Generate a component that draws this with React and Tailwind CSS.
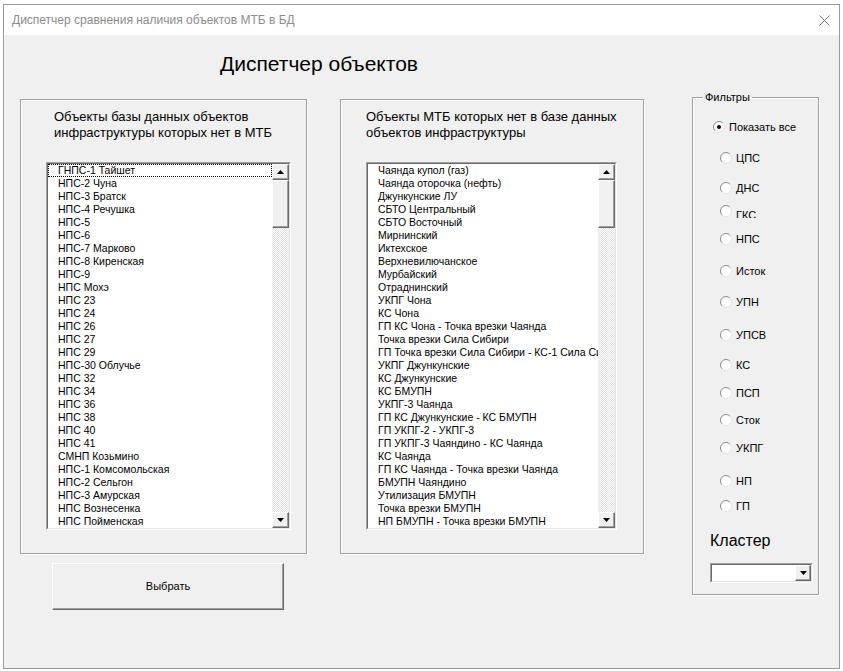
import React from 'react'

const leftItems = [
  'ГНПС-1 Тайшет', 'НПС-2 Чуна', 'НПС-3 Братск', 'НПС-4 Речушка', 'НПС-5', 'НПС-6',
  'НПС-7 Марково', 'НПС-8 Киренская', 'НПС-9', 'НПС Мохэ', 'НПС 23', 'НПС 24', 'НПС 26',
  'НПС 27', 'НПС 29', 'НПС-30 Облучье', 'НПС 32', 'НПС 34', 'НПС 36', 'НПС 38', 'НПС 40',
  'НПС 41', 'СМНП Козьмино', 'НПС-1 Комсомольская', 'НПС-2 Сельгон', 'НПС-3 Амурская',
  'НПС Вознесенка', 'НПС Пойменская',
];

const rightItems = [
  'Чаянда купол (газ)', 'Чаянда оторочка (нефть)', 'Джункунские ЛУ', 'СБТО Центральный',
  'СБТО Восточный', 'Мирнинский', 'Иктехское', 'Верхневилючанское', 'Мурбайский',
  'Отраднинский', 'УКПГ Чона', 'КС Чона', 'ГП КС Чона - Точка врезки Чаянда',
  'Точка врезки Сила Сибири', 'ГП Точка врезки Сила Сибири - КС-1 Сила Сибири',
  'УКПГ Джункунские', 'КС Джункунские', 'КС БМУПН', 'УКПГ-3 Чаянда',
  'ГП КС Джункунские - КС БМУПН', 'ГП УКПГ-2 - УКПГ-3', 'ГП УКПГ-3 Чаяндино - КС Чаянда',
  'КС Чаянда', 'ГП КС Чаянда - Точка врезки Чаянда', 'БМУПН Чаяндино', 'Утилизация БМУПН',
  'Точка врезки БМУПН', 'НП БМУПН - Точка врезки БМУПН',
];

// vertical gaps copied from the form (the designer did not align them)
const filters = [
  { label: 'Показать все', mt: 'mt-[23px]', pl: 'pl-[20px]', checked: true },
  { label: 'ЦПС', mt: 'mt-[18px]', pl: 'pl-[27px]' },
  { label: 'ДНС', mt: 'mt-[17px]', pl: 'pl-[27px]' },
  { label: 'ГКС', mt: 'mt-[10px]', pl: 'pl-[27px]', clipped: true },
  { label: 'НПС', mt: 'mt-[15px]', pl: 'pl-[27px]' },
  { label: 'Исток', mt: 'mt-[19px]', pl: 'pl-[27px]' },
  { label: 'УПН', mt: 'mt-[18px]', pl: 'pl-[27px]' },
  { label: 'УПСВ', mt: 'mt-[20px]', pl: 'pl-[27px]' },
  { label: 'КС', mt: 'mt-[17px]', pl: 'pl-[27px]' },
  { label: 'ПСП', mt: 'mt-[15px]', pl: 'pl-[27px]' },
  { label: 'Сток', mt: 'mt-[14px]', pl: 'pl-[27px]' },
  { label: 'УКПГ', mt: 'mt-[15px]', pl: 'pl-[27px]' },
  { label: 'НП', mt: 'mt-[20px]', pl: 'pl-[27px]' },
  { label: 'ГП', mt: 'mt-[12px]', pl: 'pl-[27px]' },
];

function Arrow({ up }) {
  return (
    <svg width="7" height="4" viewBox="0 0 7 4">
      <polygon points={up ? '3.5,0 7,4 0,4' : '0,0 7,0 3.5,4'} fill="#000" />
    </svg>
  );
}

function Raised({ className = '', children }) {
  return (
    <div className={`flex items-center justify-center border border-t-white border-l-white border-r-[#696969] border-b-[#696969] bg-[#f0f0f0] shadow-[inset_-1px_-1px_0_#a0a0a0] ${className}`}>
      {children}
    </div>
  );
}

function Scrollbar() {
  return (
    <div className="flex w-[17px] shrink-0 flex-col bg-[repeating-conic-gradient(#e4e4e4_0%_25%,#fbfbfb_0%_50%)] bg-[length:2px_2px]">
      <Raised className="h-[16px]"><Arrow up /></Raised>
      <Raised className="h-[48px]" />
      <div className="flex-1" />
      <Raised className="h-[16px]"><Arrow /></Raised>
    </div>
  );
}

function ListBox({ items, focused, className = '' }) {
  return (
    <div className={`border border-[#a0a0a0] border-r-white border-b-white ${className}`}>
      <div className="flex h-full border border-[#696969] border-r-[#e3e3e3] border-b-[#e3e3e3] bg-white">
        <div className="flex-1 overflow-hidden">
          {items.map((it, i) => (
            <div
              key={i}
              className={`h-[13px] whitespace-nowrap pl-[9px] text-[10.5px] leading-[11px] text-black border ${focused && i === 0 ? 'border-dotted border-black' : 'border-transparent'}`}
            >
              {it}
            </div>
          ))}
        </div>
        <Scrollbar />
      </div>
    </div>
  );
}

function Radio({ checked }) {
  return (
    <svg width="12" height="12" viewBox="0 0 12 12" className="shrink-0 -mt-[2px]">
      <circle cx="6" cy="6" r="5.5" fill="#fff" />
      <path d="M2.1 9.9 A5.5 5.5 0 0 1 9.9 2.1" fill="none" stroke="#8a8a8a" />
      <path d="M9.9 2.1 A5.5 5.5 0 0 1 2.1 9.9" fill="none" stroke="#e3e3e3" />
      {checked && <circle cx="6" cy="6" r="2" fill="#000" />}
    </svg>
  );
}

function Frame({ className = '', children }) {
  return (
    <div className={`border border-[#a0a0a0] shadow-[inset_1px_1px_0_#fff,1px_1px_0_#fff] ${className}`}>
      {children}
    </div>
  );
}

export default function App() {
  return (
    <div className="h-[671px] w-[843px] overflow-hidden bg-white pl-[3px] pt-[4px] font-['Liberation_Sans',Arial,sans-serif]">
      <div className="flex h-[665px] w-[837px] flex-col border border-[#9a9a9a] bg-[#f0f0f0]">

        {/* ─── Title bar ─── */}
        <div className="flex h-[30px] shrink-0 items-center justify-between bg-white pl-[8px] pr-[9px]">
          <span className="text-[12px] text-[#8c8c8c]">Диспетчер сравнения наличия объектов МТБ в БД</span>
          <svg width="11" height="11" viewBox="0 0 11 11">
            <path d="M0.5 0.5 L10.5 10.5 M10.5 0.5 L0.5 10.5" stroke="#7a7a7a" strokeWidth="1" />
          </svg>
        </div>

        {/* ─── Body ─── */}
        <div className="flex-1">
          <h1 className="pl-[216px] pt-[16px] text-[21px] leading-[26px] text-black">Диспетчер объектов</h1>

          <div className="mt-[20px] flex items-start">
            {/* Left column */}
            <div className="ml-[16px] mt-[2px]">
              <Frame className="h-[455px] w-[287px]">
                <p className="pl-[33px] pt-[9px] text-[13px] leading-[16px] text-black">
                  Объекты базы данных объектов<br />инфраструктуры которых нет в МТБ
                </p>
                <ListBox items={leftItems} focused className="ml-[25px] mt-[21px] h-[368px] w-[245px]" />
              </Frame>
              <button className="ml-[32px] mt-[9px] flex h-[47px] w-[232px] items-center justify-center border border-t-white border-l-white border-r-[#696969] border-b-[#696969] bg-[#f0f0f0] text-[11px] text-black shadow-[inset_-1px_-1px_0_#a0a0a0]">
                Выбрать
              </button>
            </div>

            {/* Middle column */}
            <Frame className="ml-[33px] mt-[2px] h-[455px] w-[304px]">
              <p className="pl-[25px] pt-[9px] text-[13px] leading-[16px] text-black">
                Объекты МТБ которых нет в базе данных<br />объектов инфраструктуры
              </p>
              <ListBox items={rightItems} className="ml-[25px] mt-[21px] h-[368px] w-[251px]" />
            </Frame>

            {/* Filters */}
            <Frame className="relative ml-[48px] h-[498px] w-[127px]">
              <span className="absolute -top-[8px] left-[10px] bg-[#f0f0f0] px-[2px] text-[11px] leading-[14px] text-black">Фильтры</span>
              <div className="flex flex-col">
                {filters.map((f, i) => (
                  <div key={i} className={`flex h-[13px] items-center gap-[4px] ${f.mt} ${f.pl}`}>
                    <Radio checked={f.checked} />
                    <span className={`text-[11px] leading-[13px] text-black ${f.clipped ? 'h-[9px] overflow-hidden self-end' : ''}`}>{f.label}</span>
                  </div>
                ))}
              </div>
              <div className="ml-[17px] mt-[18px] text-[16px] leading-[20px] text-black">Кластер</div>
              <div className="ml-[17px] mt-[12px] h-[20px] w-[103px] border border-[#a0a0a0] border-r-white border-b-white">
                <div className="flex h-full border border-[#696969] border-r-[#e3e3e3] border-b-[#e3e3e3] bg-white">
                  <div className="flex-1" />
                  <Raised className="w-[16px]"><Arrow /></Raised>
                </div>
              </div>
            </Frame>
          </div>
        </div>
      </div>
    </div>
  )
}
